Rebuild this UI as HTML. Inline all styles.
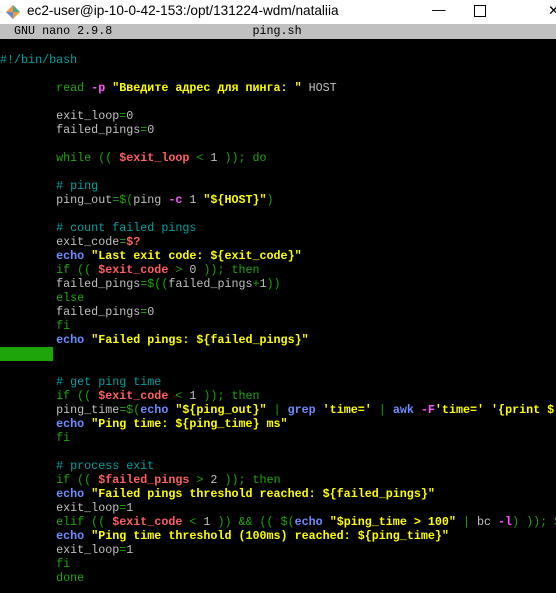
<!DOCTYPE html>
<html><head><meta charset="utf-8"><style>
body{margin:0;width:556px;height:593px;overflow:hidden;background:#000;position:relative;font-family:"Liberation Mono","DejaVu Sans Mono",monospace}
.tb{position:absolute;left:0;top:0;width:556px;height:24px;background:#fff;font-family:"Liberation Sans",sans-serif;font-size:13.6px;color:#000}
.tb .t{position:absolute;left:27px;top:3px}
.hd{position:absolute;left:0;top:24px;width:556px;height:15px;background:#c0c0c0;color:#000;font-size:11.7px;line-height:15px;white-space:pre}
pre{position:absolute;left:0;top:53px;margin:0;font-size:11.7px;line-height:14px;color:#c0c0c0;font-family:inherit}
.c{color:#00a0a0}.k{color:#1ea50a}.v{color:#ff5f5f;font-weight:bold}.s{color:#ffff00;font-weight:bold}.e{color:#6f8cff;font-weight:bold}.m{color:#ff55ff;font-weight:bold}
.bar{position:absolute;left:0;top:347px;width:53px;height:14px;background:#1ea50a}
</style></head><body>
<div class="tb"><svg style="position:absolute;left:6px;top:5px" width="14" height="14" viewBox="0 0 14 14"><path d="M7 0L14 7L7 14L0 7Z" fill="#e94"/><path d="M7 0L14 7L7 7Z" fill="#4a8"/><path d="M0 7L7 7L7 14Z" fill="#68c"/></svg><span class="t">ec2-user@ip-10-0-42-153:/opt/131224-wdm/nataliia</span>
<span style="position:absolute;left:432px;top:2px">—</span>
<span style="position:absolute;left:474px;top:5px;width:10px;height:10px;border:1px solid #000"></span>
<span style="position:absolute;left:548px;top:3px">✕</span></div>
<div class="hd">  GNU nano 2.9.8                    ping.sh</div>
<div class="bar"></div>
<pre><span class="c">#!/bin/bash</span>

        <span class="k">read</span> <span class="m">-p</span> <span class="s">"Введите адрес для пинга: "</span> HOST

        exit_loop<span class="k">=</span>0
        failed_pings<span class="k">=</span>0

        <span class="k">while ((</span> <span class="v">$exit_loop</span> <span class="k">&lt;</span> 1 <span class="k">)); do</span>

        <span class="c"># ping</span>
        ping_out<span class="k">=$(</span>ping <span class="m">-c</span> 1 <span class="s">"${HOST}"</span><span class="k">)</span>

        <span class="c"># count failed pings</span>
        exit_code<span class="k">=</span><span class="v">$?</span>
        <span class="e">echo</span> <span class="s">"Last exit code: ${exit_code}"</span>
        <span class="k">if ((</span> <span class="v">$exit_code</span> <span class="k">&gt;</span> 0 <span class="k">)); then</span>
        failed_pings<span class="k">=$((</span>failed_pings<span class="k">+</span>1<span class="k">))</span>
        <span class="k">else</span>
        failed_pings<span class="k">=</span>0
        <span class="k">fi</span>
        <span class="e">echo</span> <span class="s">"Failed pings: ${failed_pings}"</span>


        <span class="c"># get ping time</span>
        <span class="k">if ((</span> <span class="v">$exit_code</span> <span class="k">&lt;</span> 1 <span class="k">)); then</span>
        ping_time<span class="k">=$(</span><span class="e">echo</span> <span class="s">"${ping_out}"</span> <span class="k">|</span> <span class="e">grep</span> <span class="s">'time='</span> <span class="k">|</span> <span class="e">awk</span> <span class="m">-F</span><span class="s">'time='</span> <span class="s">'{print $</span>
        <span class="e">echo</span> <span class="s">"Ping time: ${ping_time} ms"</span>
        <span class="k">fi</span>

        <span class="c"># process exit</span>
        <span class="k">if ((</span> <span class="v">$failed_pings</span> <span class="k">&gt;</span> 2 <span class="k">)); then</span>
        <span class="e">echo</span> <span class="s">"Failed pings threshold reached: ${failed_pings}"</span>
        exit_loop<span class="k">=</span>1
        <span class="k">elif ((</span> <span class="v">$exit_code</span> <span class="k">&lt;</span> 1 <span class="k">)) &amp;&amp; (( $(</span><span class="e">echo</span> <span class="s">"$ping_time &gt; 100"</span> <span class="k">|</span> bc <span class="m">-l</span><span class="k">) )); $</span>
        <span class="e">echo</span> <span class="s">"Ping time threshold (100ms) reached: ${ping_time}"</span>
        exit_loop<span class="k">=</span>1
        <span class="k">fi</span>
        <span class="k">done</span>
</pre>
</body></html>
